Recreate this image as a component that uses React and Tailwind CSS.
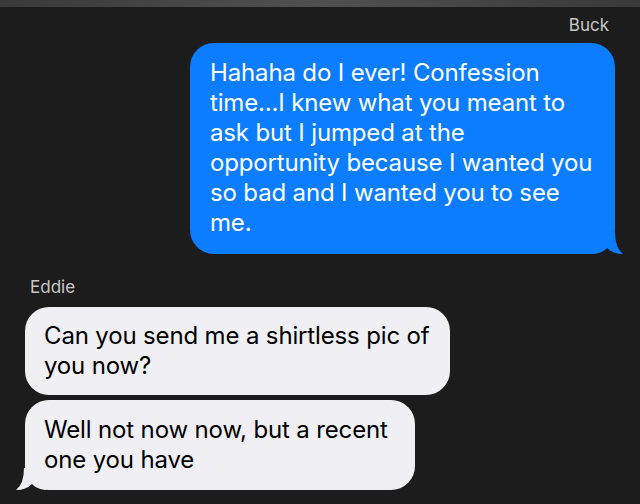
import React from "react";

const font = { fontFamily: "Inter, 'Noto Sans', sans-serif" };

export default function App() {
  return (
    <div className="w-[640px] h-[504px] overflow-hidden bg-[#1c1c1c] relative" style={font}>
      <div className="h-[7px] bg-gradient-to-r from-[#3a3a3a] via-[#505050] to-[#3a3a3a]" />
      <div className="flex flex-col">
        <div className="flex justify-end pr-[31px] pt-[8px] text-[17px] leading-[20px] text-[#c8c8c8]">Buck</div>
        <div className="flex justify-end pr-[25px] mt-[8px]">
          <div className="relative w-[425px] rounded-[24px] bg-[#0b7dfe] pl-[20px] pr-[6px] pt-[15px] pb-[16px] text-white text-[24px] leading-[30px] tracking-[-0.15px] whitespace-nowrap">
            <div>Hahaha do I ever! Confession</div>
            <div>time...I knew what you meant to</div>
            <div>ask but I jumped at the</div>
            <div>opportunity because I wanted you</div>
            <div>so bad and I wanted you to see</div>
            <div>me.</div>
            <svg className="absolute right-[-8px] bottom-0" width="30" height="22" viewBox="0 0 30 22">
              <path d="M0 0 L22 0 Q22 16 30 22 Q20 22 14 16 Q10 21 0 22 Z" fill="#0b7dfe" />
            </svg>
          </div>
        </div>
        <div className="pl-[30px] mt-[23px] text-[17px] leading-[20px] text-[#c8c8c8]">Eddie</div>
        <div className="pl-[25px] mt-[10px] flex flex-col gap-[5px] items-start">
          <div className="w-[425px] rounded-[24px] bg-[#efeff4] pl-[19px] pr-[6px] pt-[14px] pb-[14px] text-black text-[24px] leading-[30px] tracking-[-0.15px] whitespace-nowrap">
            <div>Can you send me a shirtless pic of</div>
            <div>you now?</div>
          </div>
          <div className="relative w-[390px] rounded-[24px] bg-[#efeff4] pl-[19px] pr-[6px] pt-[15px] pb-[15px] text-black text-[24px] leading-[30px] tracking-[-0.15px] whitespace-nowrap">
            <div>Well not now now, but a recent</div>
            <div>one you have</div>
            <svg className="absolute left-[-9px] bottom-0" width="30" height="22" viewBox="0 0 30 22">
              <path d="M30 0 L8 0 Q8 16 0 22 Q10 22 16 16 Q20 21 30 22 Z" fill="#efeff4" />
            </svg>
          </div>
        </div>
      </div>
    </div>
  );
}
